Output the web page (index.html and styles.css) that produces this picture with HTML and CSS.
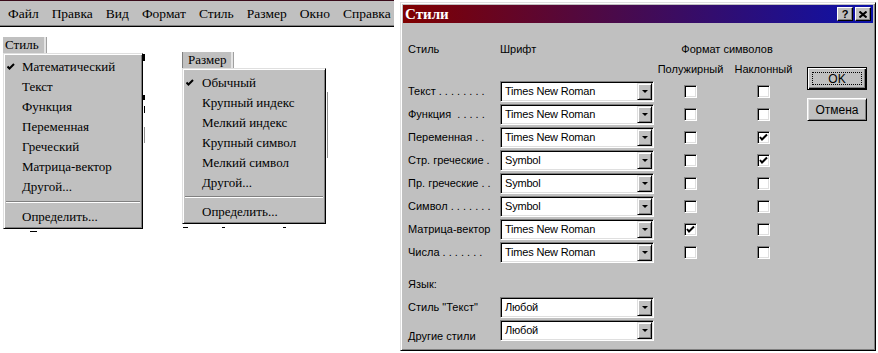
FILE: index.html
```html
<!DOCTYPE html>
<html>
	<head>
		<meta charset="utf-8">
		<title>Стили</title>
		<link rel="stylesheet" href="styles.css">
	</head>
	<body>
		<div class="screen">
			<div class="editor">
				<div class="menubar">
					<span>Файл</span>
					<span>Правка</span>
					<span>Вид</span>
					<span>Формат</span>
					<span>Стиль</span>
					<span>Размер</span>
					<span>Окно</span>
					<span>Справка</span>
				</div>

				<!-- bits of the document peeking out behind the menus -->
				<span class="mark mark-a"></span>
				<span class="mark mark-b"></span>
				<span class="mark mark-c"></span>
				<span class="mark mark-d"></span>
				<span class="mark mark-e"></span>
				<span class="mark mark-f"></span>
				<span class="mark mark-g"></span>
				<span class="mark mark-h"></span>
				<span class="mark mark-i"></span>

				<div class="menu menu-style">
					<div class="menu-tab">Стиль</div>
					<ul class="menu-list">
						<li><span class="check"><svg width="8" height="8" viewBox="0 0 8 8"><polyline points="0.5,3.5 2.5,5.5 7,1" fill="none" stroke="#000" stroke-width="2"/></svg></span>Математический</li>
						<li><span class="check"></span>Текст</li>
						<li><span class="check"></span>Функция</li>
						<li><span class="check"></span>Переменная</li>
						<li><span class="check"></span>Греческий</li>
						<li><span class="check"></span>Матрица-вектор</li>
						<li><span class="check"></span>Другой...</li>
						<li class="sep"></li>
						<li><span class="check"></span>Определить...</li>
					</ul>
				</div>

				<div class="menu menu-size">
					<div class="menu-tab">Размер</div>
					<ul class="menu-list">
						<li><span class="check"><svg width="8" height="8" viewBox="0 0 8 8"><polyline points="0.5,3.5 2.5,5.5 7,1" fill="none" stroke="#000" stroke-width="2"/></svg></span>Обычный</li>
						<li><span class="check"></span>Крупный индекс</li>
						<li><span class="check"></span>Мелкий индекс</li>
						<li><span class="check"></span>Крупный символ</li>
						<li><span class="check"></span>Мелкий символ</li>
						<li><span class="check"></span>Другой...</li>
						<li class="sep"></li>
						<li><span class="check"></span>Определить...</li>
					</ul>
				</div>
			</div>

			<div class="dialog">
				<div class="titlebar">
					<span class="title">Стили</span>
					<div class="title-buttons">
						<span class="tbtn help">?</span>
						<span class="tbtn"><svg width="8" height="7" viewBox="0 0 8 7"><path d="M0.5 0.5 L7.5 6.5 M7.5 0.5 L0.5 6.5" stroke="#000" stroke-width="2"/></svg></span>
					</div>
				</div>

				<div class="dialog-body">
					<div class="form">
						<div class="head">Стиль</div>
						<div class="head">Шрифт</div>
						<div class="head span2">Формат символов</div>

						<div></div>
						<div></div>
						<div class="subhead">Полужирный</div>
						<div class="subhead">Наклонный</div>

						<div class="label">Текст . . . . . . . .</div>
						<div class="combo"><span class="combo-text">Times New Roman</span><span class="combo-btn"><i></i></span></div>
						<div class="cell"><span class="checkbox"></span></div>
						<div class="cell"><span class="checkbox"></span></div>

						<div class="label">Функция &nbsp;. . . . .</div>
						<div class="combo"><span class="combo-text">Times New Roman</span><span class="combo-btn"><i></i></span></div>
						<div class="cell"><span class="checkbox"></span></div>
						<div class="cell"><span class="checkbox"></span></div>

						<div class="label">Переменная . .</div>
						<div class="combo"><span class="combo-text">Times New Roman</span><span class="combo-btn"><i></i></span></div>
						<div class="cell"><span class="checkbox"></span></div>
						<div class="cell"><span class="checkbox checked"><svg width="9" height="9" viewBox="0 0 9 9"><polyline points="1,4 3,6.5 8,1.5" fill="none" stroke="#000" stroke-width="2"/></svg></span></div>

						<div class="label">Стр. греческие .</div>
						<div class="combo"><span class="combo-text">Symbol</span><span class="combo-btn"><i></i></span></div>
						<div class="cell"><span class="checkbox"></span></div>
						<div class="cell"><span class="checkbox checked"><svg width="9" height="9" viewBox="0 0 9 9"><polyline points="1,4 3,6.5 8,1.5" fill="none" stroke="#000" stroke-width="2"/></svg></span></div>

						<div class="label">Пр. греческие . .</div>
						<div class="combo"><span class="combo-text">Symbol</span><span class="combo-btn"><i></i></span></div>
						<div class="cell"><span class="checkbox"></span></div>
						<div class="cell"><span class="checkbox"></span></div>

						<div class="label">Символ . . . . . . .</div>
						<div class="combo"><span class="combo-text">Symbol</span><span class="combo-btn"><i></i></span></div>
						<div class="cell"><span class="checkbox"></span></div>
						<div class="cell"><span class="checkbox"></span></div>

						<div class="label">Матрица-вектор</div>
						<div class="combo"><span class="combo-text">Times New Roman</span><span class="combo-btn"><i></i></span></div>
						<div class="cell"><span class="checkbox checked"><svg width="9" height="9" viewBox="0 0 9 9"><polyline points="1,4 3,6.5 8,1.5" fill="none" stroke="#000" stroke-width="2"/></svg></span></div>
						<div class="cell"><span class="checkbox"></span></div>

						<div class="label">Числа . . . . . . .</div>
						<div class="combo"><span class="combo-text">Times New Roman</span><span class="combo-btn"><i></i></span></div>
						<div class="cell"><span class="checkbox"></span></div>
						<div class="cell"><span class="checkbox"></span></div>

						<div class="label lang span-all">Язык:</div>

						<div class="label">Стиль "Текст"</div>
						<div class="combo"><span class="combo-text">Любой</span><span class="combo-btn"><i></i></span></div>
						<div></div>
						<div></div>

						<div class="label low">Другие стили</div>
						<div class="combo"><span class="combo-text">Любой</span><span class="combo-btn"><i></i></span></div>
					</div>

					<div class="buttons">
						<div class="btn default"><span class="focus">OK</span></div>
						<div class="btn">Отмена</div>
					</div>
				</div>
			</div>
		</div>
	</body>
</html>
```

FILE: styles.css
```css
* {
	box-sizing: border-box;
}
body {
	margin: 0;
	background: #fff;
	font-family: "Liberation Sans", Arial, sans-serif;
	font-size: 11px;
	color: #000;
}
.screen {
	display: flex;
	width: 878px;
	height: 353px;
	overflow: hidden;
}

/* left side: editor with open menus */
.editor {
	position: relative;
	width: 400px;
	flex: none;
}
.menubar {
	display: flex;
	align-items: center;
	gap: 13px;
	width: 394px;
	height: 27px;
	padding-left: 8px;
	background: #c0c0c0;
	border-top: 1px solid #3a0a1a;
	border-bottom: 1px solid #000;
	box-shadow: inset 0 -1px 0 #808080;
	font-family: "Liberation Serif", "Times New Roman", serif;
	font-size: 13.5px;
	white-space: nowrap;
}
.menubar span {
	flex: none;
}
.menu {
	position: absolute;
	font-family: "Liberation Serif", "Times New Roman", serif;
	font-size: 13px;
}
.menu-style {
	left: 3px;
	top: 37px;
}
.menu-size {
	left: 182px;
	top: 52px;
}
.menu-tab {
	display: inline-block;
	height: 16px;
	line-height: 15px;
	padding: 0 5px 0 2px;
	background: #c0c0c0;
	border-right: 2px solid #e4e4e4;
	box-shadow: 1px 0 0 #a0a0a0;
}
.menu-size .menu-tab {
	padding-left: 5px;
	border-left: 1px solid #808080;
}
.menu-list {
	list-style: none;
	margin: 0;
	padding: 3px 0 1px;
	background: #c0c0c0;
	border: 1px solid;
	border-color: #dfdfdf #000 #000 #dfdfdf;
	box-shadow: inset 1px 1px 0 #fff, inset -1px -1px 0 #808080;
}
.menu-style .menu-list {
	width: 140px;
}
.menu-size .menu-list {
	width: 144px;
	padding-top: 4px;
}
.menu-list li {
	display: flex;
	align-items: center;
	height: 20px;
}
.menu-list li.sep {
	height: 2px;
	margin: 4px 2px;
	border-top: 1px solid #808080;
	border-bottom: 1px solid #fff;
}
.menu-size .menu-list li.sep {
	margin: 3px 2px 4px;
}
.check {
	display: flex;
	align-items: center;
	width: 18px;
	padding-left: 3px;
	flex: none;
}
.menu-size .check {
	width: 19px;
}

.mark {
	position: absolute;
	background: #000;
}
.mark-a { left: 143px; top: 54px; width: 2px; height: 7px; }
.mark-b { left: 143px; top: 95px; width: 2px; height: 5px; }
.mark-c { left: 144px; top: 106px; width: 1px; height: 7px; }
.mark-d { left: 144px; top: 127px; width: 1px; height: 16px; background: #909090; }
.mark-e { left: 30px; top: 231px; width: 7px; height: 1px; }
.mark-f { left: 183px; top: 227px; width: 5px; height: 1px; }
.mark-g { left: 222px; top: 227px; width: 3px; height: 1px; }
.mark-h { left: 283px; top: 227px; width: 3px; height: 1px; }
.mark-i { left: 327px; top: 92px; width: 1px; height: 66px; background: #909090; }

/* right side: the dialog window */
.dialog {
	width: 476px;
	height: 349px;
	margin-top: 2px;
	flex: none;
	padding: 2px;
	background: #c0c0c0;
	border: 1px solid;
	border-color: #dfdfdf #000 #000 #dfdfdf;
	box-shadow: inset 1px 1px 0 #fff, inset -1px -1px 0 #808080;
}
.titlebar {
	display: flex;
	align-items: center;
	justify-content: space-between;
	height: 18px;
	padding-left: 2px;
	background: linear-gradient(to right, #800000, #4a0a4a 45%, #0c12aa);
}
.title {
	color: #fff;
	font-family: "Liberation Serif", "Times New Roman", serif;
	font-weight: bold;
	font-size: 15px;
	line-height: 18px;
}
.title-buttons {
	display: flex;
	gap: 2px;
	margin-right: 2px;
}
.tbtn {
	display: flex;
	align-items: center;
	justify-content: center;
	width: 16px;
	height: 14px;
	background: #c0c0c0;
	border: 1px solid;
	border-color: #fff #000 #000 #fff;
	box-shadow: inset -1px -1px 0 #808080;
	font-weight: bold;
	font-size: 11px;
}

.dialog-body {
	display: flex;
	padding: 18px 0 0 5px;
}
.form {
	display: grid;
	grid-template-columns: 92px 154px 73px 73px;
	grid-template-rows: 16px 20px repeat(8, 21px) 30px 21px 21px;
	row-gap: 2px;
	align-items: center;
}
.head {
	line-height: 13px;
}
.span2 {
	grid-column: span 2;
	text-align: center;
}
.subhead {
	text-align: center;
	line-height: 13px;
}
.label {
	white-space: nowrap;
	line-height: 13px;
}
.span-all {
	grid-column: 1 / -1;
}
.lang {
	align-self: start;
	padding-top: 13px;
}
.low {
	align-self: end;
	margin-bottom: -2px;
}
.combo {
	display: flex;
	height: 21px;
	padding: 1px;
	background: #fff;
	border: 1px solid;
	border-color: #808080 #fff #fff #808080;
	box-shadow: inset 1px 1px 0 #000, inset -1px -1px 0 #dfdfdf;
}
.combo-text {
	flex: 1;
	padding-left: 3px;
	line-height: 17px;
	letter-spacing: -0.2px;
}
.combo-btn {
	display: flex;
	align-items: center;
	justify-content: center;
	width: 15px;
	height: 17px;
	background: #c0c0c0;
	border: 1px solid;
	border-color: #dfdfdf #000 #000 #dfdfdf;
	box-shadow: inset 1px 1px 0 #fff, inset -1px -1px 0 #808080;
}
.combo-btn i {
	width: 0;
	height: 0;
	border-left: 3px solid transparent;
	border-right: 3px solid transparent;
	border-top: 3px solid #000;
}
.cell {
	display: flex;
	justify-content: center;
}
.checkbox {
	display: flex;
	align-items: center;
	justify-content: center;
	width: 13px;
	height: 13px;
	background: #fff;
	border: 1px solid;
	border-color: #808080 #fff #fff #808080;
	box-shadow: inset 1px 1px 0 #000, inset -1px -1px 0 #dfdfdf;
}

.buttons {
	display: flex;
	flex-direction: column;
	gap: 8px;
	margin: 26px 0 0 7px;
}
.btn {
	display: flex;
	align-items: center;
	justify-content: center;
	width: 60px;
	height: 23px;
	background: #c0c0c0;
	border: 1px solid;
	border-color: #fff #000 #000 #fff;
	box-shadow: inset 1px 1px 0 #dfdfdf, inset -1px -1px 0 #808080;
	font-size: 12px;
}
.btn.default {
	border: 1px solid #000;
	box-shadow: inset 1px 1px 0 #fff, inset -1px -1px 0 #000, inset -2px -2px 0 #808080;
	padding: 4px;
}
.focus {
	display: flex;
	align-items: center;
	justify-content: center;
	width: 100%;
	height: 100%;
	border: 1px dotted #000;
}
```
